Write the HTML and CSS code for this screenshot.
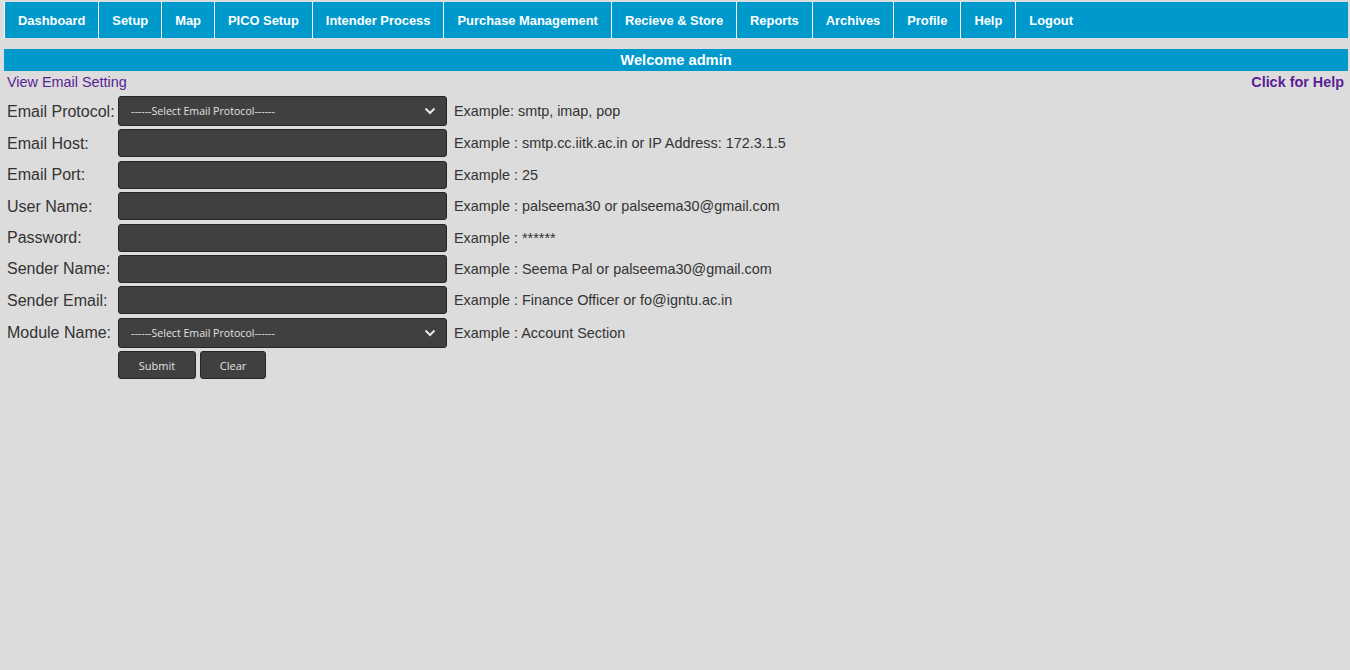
FILE: index.html
```html
<!DOCTYPE html>
<html>
<head>
<meta charset="utf-8">
<link rel="stylesheet" href="styles.css">
</head>
<body>
<div class="page">
  <nav class="nav">
    <a class="nav-item first">Dashboard</a>
    <a class="nav-item">Setup</a>
    <a class="nav-item">Map</a>
    <a class="nav-item">PICO Setup</a>
    <a class="nav-item">Intender Process</a>
    <a class="nav-item">Purchase Management</a>
    <a class="nav-item">Recieve &amp; Store</a>
    <a class="nav-item">Reports</a>
    <a class="nav-item">Archives</a>
    <a class="nav-item">Profile</a>
    <a class="nav-item">Help</a>
    <a class="nav-item last">Logout</a>
  </nav>
  <div class="welcome">Welcome admin</div>
  <div class="linkbar">
    <a class="link">View Email Setting</a>
    <a class="link bold">Click for Help</a>
  </div>
  <div class="form">
    <label class="lbl">Email Protocol:</label>
    <div class="sel"><span>------Select Email Protocol------</span><svg class="chev" width="12" height="8" viewBox="0 0 12 8"><path d="M1.5 1.5 L6 6 L10.5 1.5" fill="none" stroke="#e6e6e6" stroke-width="2"/></svg></div>
    <div class="ex">Example: smtp, imap, pop</div>

    <label class="lbl">Email Host:</label>
    <div class="inp"></div>
    <div class="ex">Example : smtp.cc.iitk.ac.in or IP Address: 172.3.1.5</div>

    <label class="lbl">Email Port:</label>
    <div class="inp"></div>
    <div class="ex">Example : 25</div>

    <label class="lbl">User Name:</label>
    <div class="inp"></div>
    <div class="ex">Example : palseema30 or palseema30@gmail.com</div>

    <label class="lbl">Password:</label>
    <div class="inp"></div>
    <div class="ex">Example : ******</div>

    <label class="lbl">Sender Name:</label>
    <div class="inp"></div>
    <div class="ex">Example : Seema Pal or palseema30@gmail.com</div>

    <label class="lbl">Sender Email:</label>
    <div class="inp"></div>
    <div class="ex">Example : Finance Officer or fo@igntu.ac.in</div>

    <label class="lbl">Module Name:</label>
    <div class="sel"><span>------Select Email Protocol------</span><svg class="chev" width="12" height="8" viewBox="0 0 12 8"><path d="M1.5 1.5 L6 6 L10.5 1.5" fill="none" stroke="#e6e6e6" stroke-width="2"/></svg></div>
    <div class="ex">Example : Account Section</div>

    <div></div>
    <div class="btns">
      <button class="btn submit">Submit</button>
      <button class="btn clear">Clear</button>
    </div>
    <div></div>
  </div>
</div>
</body>
</html>
```
FILE: styles.css
```css
html, body {
  margin: 0;
  padding: 0;
  background: #dcdcdc;
  font-family: "Liberation Sans", Arial, sans-serif;
}
.page {
  padding: 2px 2px 0 4px;
}
.nav {
  display: flex;
  background: #0099cc;
  height: 36px;
}
.nav-item {
  display: flex;
  align-items: center;
  padding: 0 13px;
  color: #fff;
  font-weight: bold;
  font-size: 12.9px;
  border-right: 1px solid #fff;
}
.nav-item.first {
  border-left: 1px solid #fff;
}
.nav-item.last {
  border-right: none;
}
.welcome {
  margin-top: 11px;
  height: 22px;
  line-height: 22px;
  background: #0099cc;
  color: #fff;
  font-weight: bold;
  font-size: 14.66px;
  text-align: center;
}
.linkbar {
  display: flex;
  justify-content: space-between;
  padding: 1px 4px 0 3px;
  height: 21px;
  line-height: 20px;
  font-size: 14.4px;
}
.link {
  color: #5a1e96;
}
.bold {
  font-weight: bold;
}
.form {
  display: grid;
  grid-template-columns: 111px 329px auto;
  row-gap: 3.4px;
  padding: 3px 0 0 3px;
  align-items: center;
}
.lbl {
  font-size: 16px;
  color: #333;
  white-space: nowrap;
  padding-top: 1px;
}
.ex {
  font-size: 14.4px;
  color: #333;
  padding-left: 7px;
  white-space: nowrap;
}
.inp, .sel {
  box-sizing: border-box;
  height: 28px;
  background: #404040;
  border: 1px solid #262626;
  border-radius: 3px;
}
.sel {
  height: 30px;
  display: flex;
  align-items: center;
  justify-content: space-between;
  padding: 0 10px 0 12px;
  font-family: "Open Sans", "Noto Sans", sans-serif;
  font-size: 10.6px;
  color: #e0e0e0;
}
.chev {
  display: block;
}
.btns {
  display: flex;
  gap: 4px;
}
.btn {
  box-sizing: border-box;
  height: 28px;
  background: #404040;
  border: 1px solid #262626;
  border-radius: 3px;
  color: #e0e0e0;
  font-family: "Open Sans", "Noto Sans", sans-serif;
  font-size: 11px;
  padding: 0;
}
.submit { width: 78px; }
.clear { width: 66px; }
```
